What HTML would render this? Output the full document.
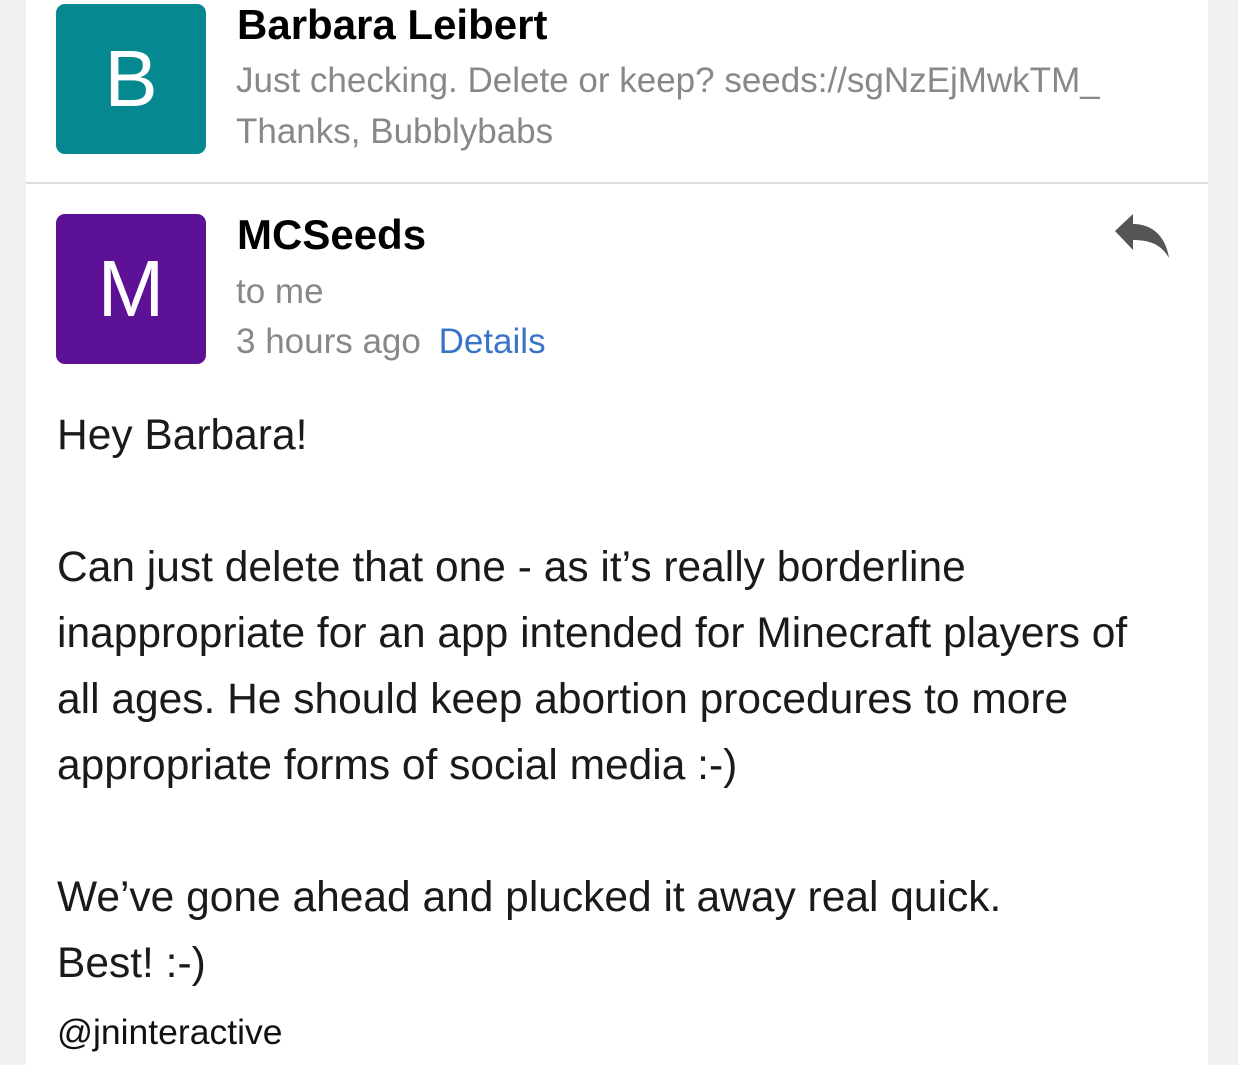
<!DOCTYPE html>
<html><head><style>
body{margin:0;width:1238px;height:1065px;background:#f0f0f0;font-family:"Liberation Sans",Helvetica,Arial,sans-serif;overflow:hidden;position:relative}
.card{position:absolute;left:26px;top:0;width:1182px;height:1065px;background:#fff}
.hr{position:absolute;left:26px;top:182px;width:1182px;height:2px;background:#dcdcdc}
.av{position:absolute;left:56px;width:150px;height:150px;border-radius:9px;color:#fff;font-size:80px;text-align:center;line-height:150px}
.t{position:absolute;white-space:nowrap}
.name{font-weight:bold;font-size:42px;color:#000}
.g{font-size:35px;color:#888}
.b{font-size:42.5px;color:#1a1a1a;left:57px}
</style></head><body>
<div class="card"></div>
<div class="hr"></div>
<div class="av" style="top:4px;background:#068890">B</div>
<div class="t name" style="left:237px;top:1px">Barbara Leibert</div>
<div class="t g" style="left:236px;top:61px">Just checking. Delete or keep? seeds://sgNzEjMwkTM_</div>
<div class="t g" style="left:236px;top:112px">Thanks, Bubblybabs</div>
<div class="av" style="top:214px;background:#5c1196">M</div>
<div class="t name" style="left:237px;top:211px">MCSeeds</div>
<div class="t g" style="left:236px;top:272px">to me</div>
<div class="t g" style="left:236px;top:322px">3 hours ago <span style="color:#3a74c9;margin-left:8px">Details</span></div>
<svg style="position:absolute;left:1112px;top:212px" width="60" height="50" viewBox="0 0 60 50"><path d="M3 19 L21 2 L21 12 C42 12 54 26 57 46 C50 34 40 28 21 28 L21 38 Z" fill="#555"/></svg>
<div class="t b" style="top:412px">Hey Barbara!</div>
<div class="t b" style="top:544px">Can just delete that one - as it’s really borderline</div>
<div class="t b" style="top:610px">inappropriate for an app intended for Minecraft players of</div>
<div class="t b" style="top:676px">all ages. He should keep abortion procedures to more</div>
<div class="t b" style="top:742px">appropriate forms of social media :-)</div>
<div class="t b" style="top:874px">We’ve gone ahead and plucked it away real quick.</div>
<div class="t b" style="top:940px">Best! :-)</div>
<div class="t" style="left:57px;top:1012px;font-size:35.5px;color:#111">@jninteractive</div>
</body></html>
